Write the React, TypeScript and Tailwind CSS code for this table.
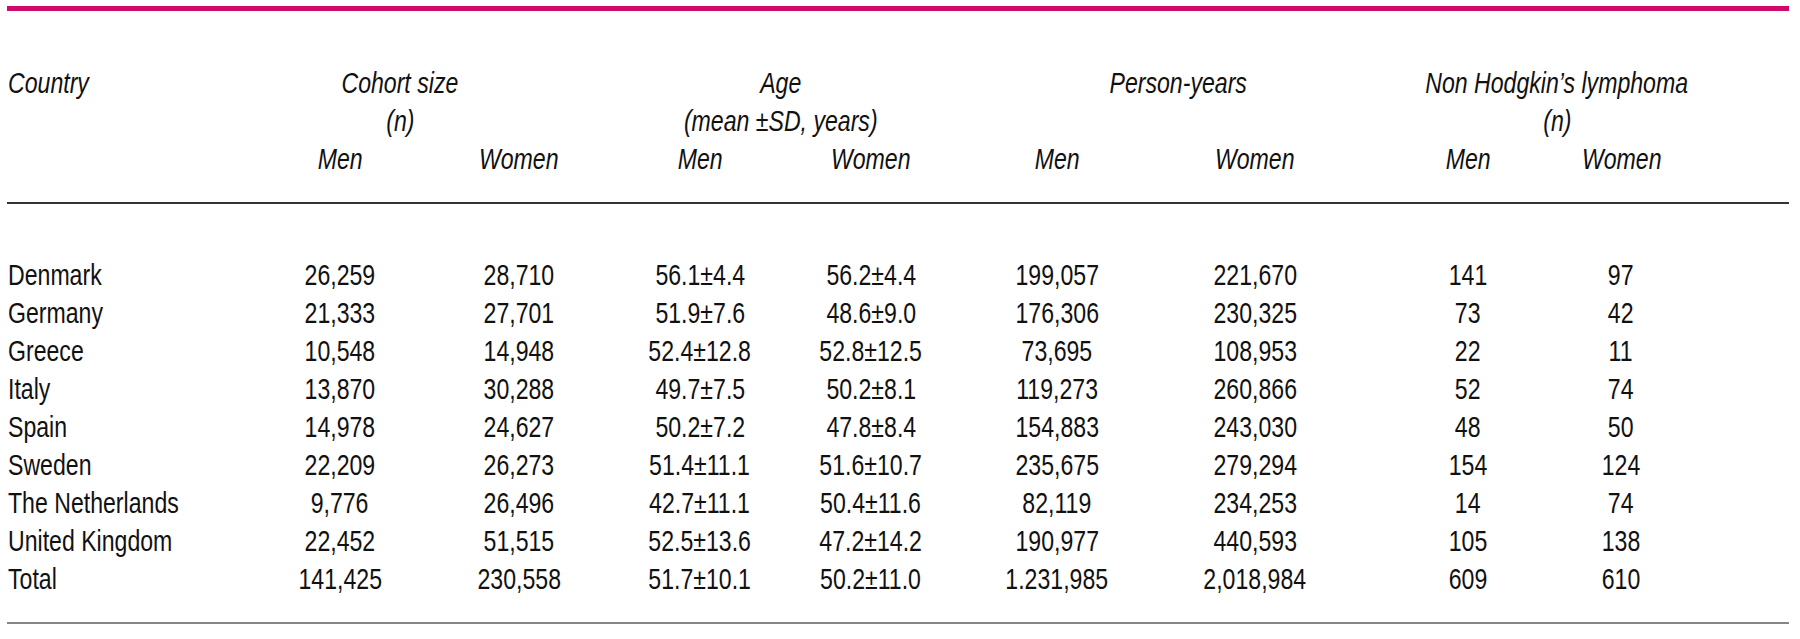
import type { ReactNode } from "react";

type Row = {
  country: string;
  cohortMen: string;
  cohortWomen: string;
  ageMen: string;
  ageWomen: string;
  pyMen: string;
  pyWomen: string;
  nhlMen: string;
  nhlWomen: string;
};

const rows: Row[] = [
  { country: "Denmark", cohortMen: "26,259", cohortWomen: "28,710", ageMen: "56.1±4.4", ageWomen: "56.2±4.4", pyMen: "199,057", pyWomen: "221,670", nhlMen: "141", nhlWomen: "97" },
  { country: "Germany", cohortMen: "21,333", cohortWomen: "27,701", ageMen: "51.9±7.6", ageWomen: "48.6±9.0", pyMen: "176,306", pyWomen: "230,325", nhlMen: "73", nhlWomen: "42" },
  { country: "Greece", cohortMen: "10,548", cohortWomen: "14,948", ageMen: "52.4±12.8", ageWomen: "52.8±12.5", pyMen: "73,695", pyWomen: "108,953", nhlMen: "22", nhlWomen: "11" },
  { country: "Italy", cohortMen: "13,870", cohortWomen: "30,288", ageMen: "49.7±7.5", ageWomen: "50.2±8.1", pyMen: "119,273", pyWomen: "260,866", nhlMen: "52", nhlWomen: "74" },
  { country: "Spain", cohortMen: "14,978", cohortWomen: "24,627", ageMen: "50.2±7.2", ageWomen: "47.8±8.4", pyMen: "154,883", pyWomen: "243,030", nhlMen: "48", nhlWomen: "50" },
  { country: "Sweden", cohortMen: "22,209", cohortWomen: "26,273", ageMen: "51.4±11.1", ageWomen: "51.6±10.7", pyMen: "235,675", pyWomen: "279,294", nhlMen: "154", nhlWomen: "124" },
  { country: "The Netherlands", cohortMen: "9,776", cohortWomen: "26,496", ageMen: "42.7±11.1", ageWomen: "50.4±11.6", pyMen: "82,119", pyWomen: "234,253", nhlMen: "14", nhlWomen: "74" },
  { country: "United Kingdom", cohortMen: "22,452", cohortWomen: "51,515", ageMen: "52.5±13.6", ageWomen: "47.2±14.2", pyMen: "190,977", pyWomen: "440,593", nhlMen: "105", nhlWomen: "138" },
  { country: "Total", cohortMen: "141,425", cohortWomen: "230,558", ageMen: "51.7±10.1", ageWomen: "50.2±11.0", pyMen: "1.231,985", pyWomen: "2,018,984", nhlMen: "609", nhlWomen: "610" },
];

// column widths picked so each data column is centred where the printed table has it
const grid =
  "grid grid-cols-[263px_140px_218px_144px_198px_174px_222px_204px_102px_1fr] leading-[38px] whitespace-nowrap";

// the print face is a condensed grotesque; squeeze Liberation Sans to match
function Narrow({ children, left }: { children: ReactNode; left?: boolean }) {
  return (
    <span className={left ? "inline-block scale-x-[0.77] origin-left" : "inline-block scale-x-[0.77]"}>
      {children}
    </span>
  );
}

function C({ children, className = "" }: { children?: ReactNode; className?: string }) {
  return (
    <div className={`text-center ${className}`}>
      {children !== undefined && <Narrow>{children}</Narrow>}
    </div>
  );
}

export default function App() {
  return (
    <div
      className="bg-white text-[#111111] text-[30px] min-h-[639px] pt-[6px] pl-[7px] w-[1789px]"
      style={{ fontFamily: '"Liberation Sans", Arial, sans-serif' }}
    >
      <div className="border-t-[5px] border-[#cf0a6d]" />

      {/* Header */}
      <div className={`${grid} italic pt-[53px] pb-[24px] border-b-2 border-[#333333]`}>
        <div className="pl-[1px]">
          <Narrow left>Country</Narrow>
        </div>
        <C className="col-span-2 pr-[98px]">Cohort size</C>
        <C className="col-span-2 pr-[36px]">Age</C>
        <C className="col-span-2 pl-[20px]">Person-years</C>
        <C className="col-span-3 pr-[41px]">Non Hodgkin’s lymphoma</C>

        <div />
        <C className="col-span-2 pr-[98px]">(n)</C>
        <C className="col-span-2 pr-[36px]">(mean ±SD, years)</C>
        <div className="col-span-2" />
        <C className="col-span-3 pr-[41px]">(n)</C>

        <div />
        <C>Men</C>
        <C>Women</C>
        <C>Men</C>
        <C>Women</C>
        <C>Men</C>
        <C>Women</C>
        <C>Men</C>
        <C>Women</C>
        <div />
      </div>

      {/* Body */}
      <div className={`${grid} pt-[52px] pb-[24px] border-b-2 border-[#858585]`}>
        {rows.map((r) => (
          <div key={r.country} className="contents">
            <div className="pl-[1px]">
              <Narrow left>{r.country}</Narrow>
            </div>
            <C>{r.cohortMen}</C>
            <C>{r.cohortWomen}</C>
            <C>{r.ageMen}</C>
            <C>{r.ageWomen}</C>
            <C>{r.pyMen}</C>
            <C>{r.pyWomen}</C>
            <C>{r.nhlMen}</C>
            <C>{r.nhlWomen}</C>
            <div />
          </div>
        ))}
      </div>
    </div>
  );
}
